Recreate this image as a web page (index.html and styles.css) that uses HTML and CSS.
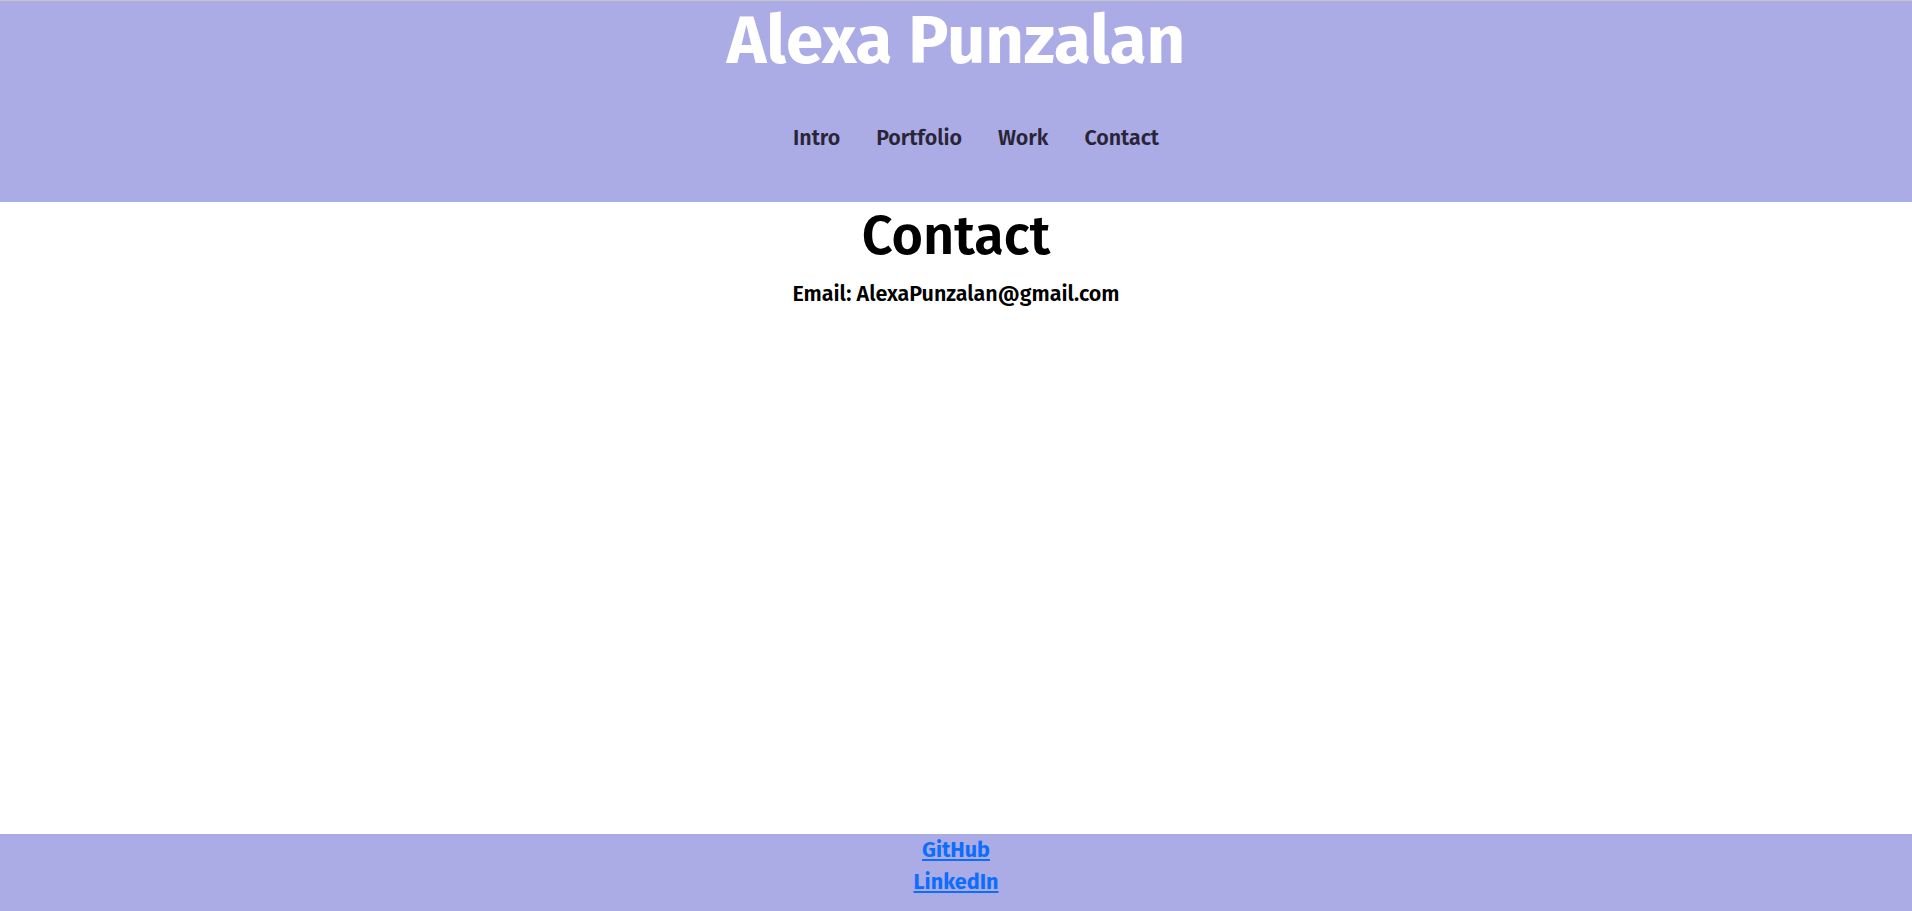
FILE: index.html
```html
<!DOCTYPE html>
<html lang="en">
<head>
<meta charset="utf-8">
<title>Alexa Punzalan - Contact</title>
<link rel="stylesheet" href="styles.css">
</head>
<body>
<div class="page">
  <header class="site-header">
    <h1 class="site-title">Alexa Punzalan</h1>
    <nav class="site-nav">
      <a href="#" class="nav-link">Intro</a>
      <a href="#" class="nav-link">Portfolio</a>
      <a href="#" class="nav-link">Work</a>
      <a href="#" class="nav-link">Contact</a>
    </nav>
  </header>
  <main class="content">
    <h2 class="section-title">Contact</h2>
    <p class="email">Email: AlexaPunzalan@gmail.com</p>
  </main>
  <footer class="site-footer">
    <a href="#" class="footer-link">GitHub</a>
    <a href="#" class="footer-link">LinkedIn</a>
  </footer>
</div>
</body>
</html>
```
FILE: styles.css
```css
html, body {
  margin: 0;
  padding: 0;
}
body {
  font-family: "Fira Sans", "Open Sans", "Liberation Sans", sans-serif;
  background: #ffffff;
  color: #000;
}
.page {
  min-height: 100vh;
  display: flex;
  flex-direction: column;
}
.site-header {
  background: #ababe5;
  border-top: 1px solid #c4c4c4;
  height: 201px;
  box-sizing: content-box;
  display: flex;
  flex-direction: column;
  align-items: center;
}
.site-title {
  margin: 0;
  font-size: 67.2px;
  line-height: 80px;
  font-weight: 700;
  color: #ffffff;
}
.site-nav {
  display: flex;
  gap: 36px;
  margin-top: 42px;
  padding-left: 40px;
}
.nav-link {
  font-size: 21.4px;
  font-weight: 600;
  color: #2a2438;
  text-decoration: none;
  line-height: 30px;
}
.content {
  flex: 1;
  display: flex;
  flex-direction: column;
  align-items: center;
}
.section-title {
  margin: 2px 0 0;
  font-size: 54px;
  line-height: 64px;
  font-weight: 600;
}
.email {
  margin: 12px 0 0;
  font-size: 21.5px;
  font-weight: 600;
  line-height: 28px;
}
.site-footer {
  background: #ababe5;
  height: 77px;
  display: flex;
  flex-direction: column;
  align-items: center;
  padding-top: 0;
  box-sizing: border-box;
}
.footer-link {
  font-size: 21.6px;
  font-weight: 700;
  color: #0d6efd;
  line-height: 32px;
}
```
